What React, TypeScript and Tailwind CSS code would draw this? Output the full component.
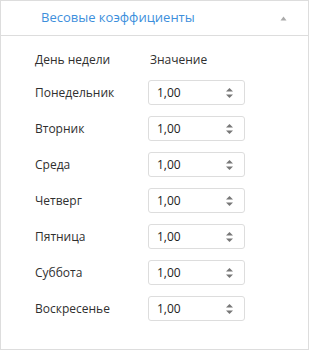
const days = ["Понедельник", "Вторник", "Среда", "Четверг", "Пятница", "Суббота", "Воскресенье"];

function Spinner() {
  return (
    <svg width="9" height="12" viewBox="0 0 9 12" className="shrink-0">
      <path d="M4.5 1 L8 4.5 L1 4.5 Z" fill="#777" />
      <path d="M4.5 11 L8 7.5 L1 7.5 Z" fill="#777" />
    </svg>
  );
}

export default function App() {
  return (
    <div className="w-[310px] h-[351px] bg-white" style={{ fontFamily: '"Open Sans", "Noto Sans", sans-serif' }}>
      <div className="w-[309px] h-[350px] border border-[#dddddd] flex flex-col">
        <div className="h-[35px] border-b border-[#dddddd] flex items-center justify-between pl-[40px] pr-[20px]">
          <span className="text-[13px] text-[#3d8fdc]">Весовые коэффициенты</span>
          <svg width="7" height="5" viewBox="0 0 7 5" className="mr-[1px]">
            <path d="M3.5 0.5 L6.5 4.5 L0.5 4.5 Z" fill="#aaaaaa" />
          </svg>
        </div>
        <div className="pl-[34px] pt-[12px] text-[12px] text-[#2f2f2f]">
          <div className="flex items-center h-[24px]">
            <span className="w-[115px]">День недели</span>
            <span>Значение</span>
          </div>
          <div className="mt-[8px] flex flex-col gap-[11px]">
            {days.map((d) => (
              <div key={d} className="flex items-center h-[25px]">
                <span className="w-[113px]">{d}</span>
                <div className="w-[97px] h-[25px] border border-[#dddddd] rounded-[3px] flex items-center justify-between pl-[8px] pr-[10px]">
                  <span className="text-[#222222]">1,00</span>
                  <Spinner />
                </div>
              </div>
            ))}
          </div>
        </div>
      </div>
    </div>
  );
}
